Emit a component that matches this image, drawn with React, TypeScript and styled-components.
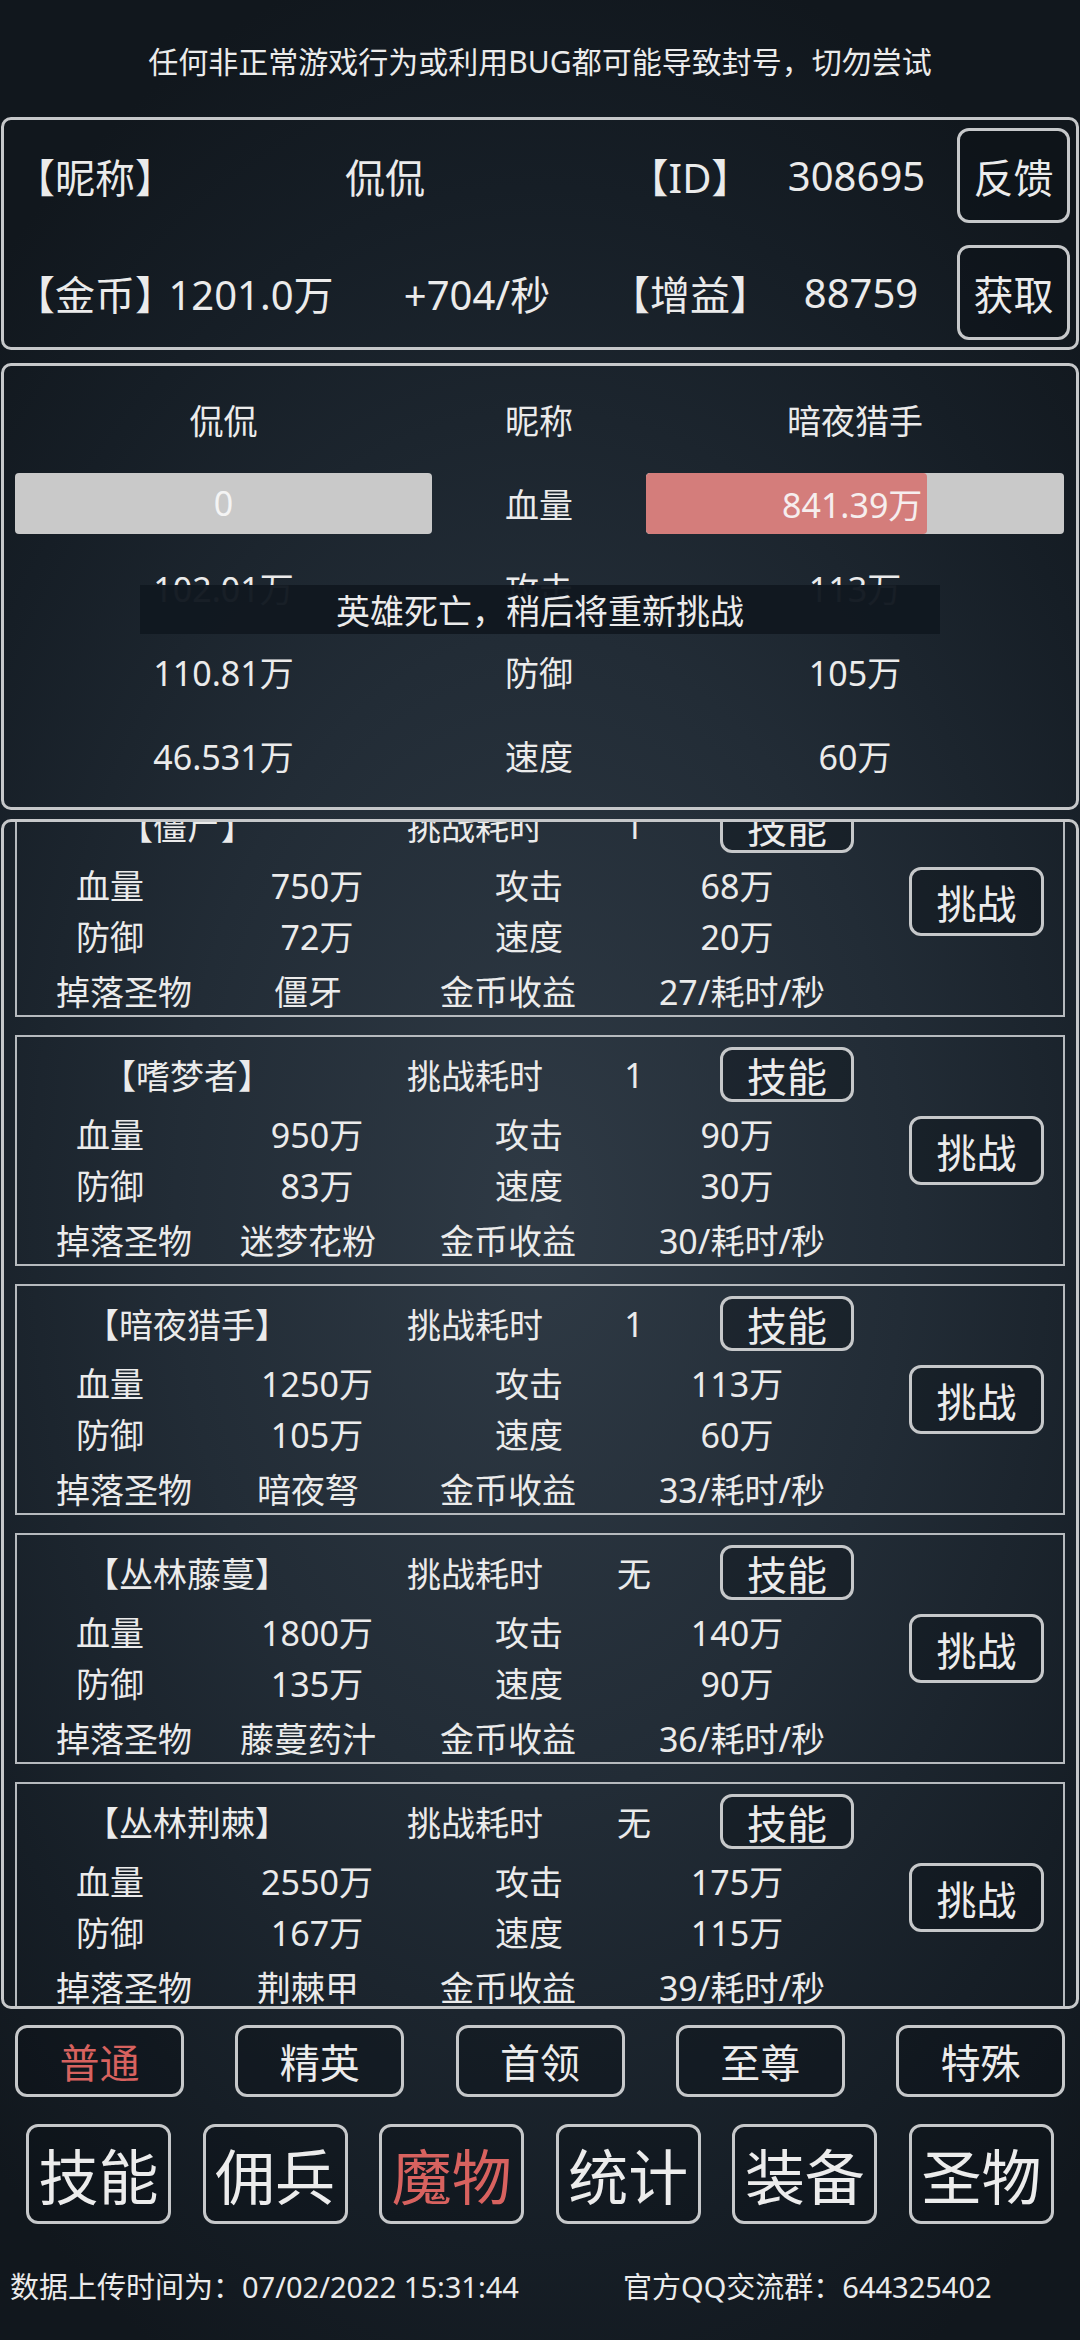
import * as React from 'react';
import styled, { createGlobalStyle } from 'styled-components';

const RED = '#d8625f';
const LINE = '#c6c8ca';

interface Monster {
  name: string;
  cost: string;
  hp: string;
  atk: string;
  def: string;
  spd: string;
  drop: string;
  gold: string;
}

const monsters: Monster[] = [
  { name: '僵尸', cost: '1', hp: '750万', atk: '68万', def: '72万', spd: '20万', drop: '僵牙', gold: '27/耗时/秒' },
  { name: '嗜梦者', cost: '1', hp: '950万', atk: '90万', def: '83万', spd: '30万', drop: '迷梦花粉', gold: '30/耗时/秒' },
  { name: '暗夜猎手', cost: '1', hp: '1250万', atk: '113万', def: '105万', spd: '60万', drop: '暗夜弩', gold: '33/耗时/秒' },
  { name: '丛林藤蔓', cost: '无', hp: '1800万', atk: '140万', def: '135万', spd: '90万', drop: '藤蔓药汁', gold: '36/耗时/秒' },
  { name: '丛林荆棘', cost: '无', hp: '2550万', atk: '175万', def: '167万', spd: '115万', drop: '荆棘甲', gold: '39/耗时/秒' },
];

const tabs = ['普通', '精英', '首领', '至尊', '特殊'];
const navItems = ['技能', '佣兵', '魔物', '统计', '装备', '圣物'];

const GlobalStyle = createGlobalStyle`
  html, body {
    margin: 0;
    padding: 0;
  }
  body {
    background: #131a21;
    color: #ebebeb;
    font-family: "Noto Sans", "Noto Sans CJK SC", sans-serif;
  }
  * {
    box-sizing: border-box;
  }
`;

function App() {
  const listRef = React.useRef<HTMLDivElement>(null);

  React.useLayoutEffect(() => {
    if (listRef.current) listRef.current.scrollTop = 36;
  }, []);

  const enemyHp = 841.39;
  const enemyMax = 1250;

  return (
    <Screen>
      <GlobalStyle />
      <Notice>任何非正常游戏行为或利用BUG都可能导致封号，切勿尝试</Notice>

      <Panel>
        <InfoRow $cols="132px 476px 134px 199px 1fr">
          <Cell>【昵称】</Cell>
          <Cell>侃侃</Cell>
          <Cell>【ID】</Cell>
          <Cell>308695</Cell>
          <SideButton>反馈</SideButton>
        </InfoRow>
        <InfoRow $cols="132px 208px 244px 182px 160px 1fr">
          <Cell>【金币】</Cell>
          <Cell>1201.0万</Cell>
          <Cell>+704/秒</Cell>
          <Cell>【增益】</Cell>
          <Cell>88759</Cell>
          <SideButton>获取</SideButton>
        </InfoRow>
      </Panel>

      <BattlePanel>
        <BattleText>侃侃</BattleText>
        <BattleText>昵称</BattleText>
        <BattleText>暗夜猎手</BattleText>

        <Bar>
          <BarCenterLabel>0</BarCenterLabel>
        </Bar>
        <BattleText>血量</BattleText>
        <Bar>
          <BarFill style={{ width: `${(enemyHp / enemyMax) * 100}%` }}>{enemyHp}万</BarFill>
        </Bar>

        <BattleText>102.01万</BattleText>
        <BattleText>攻击</BattleText>
        <BattleText>113万</BattleText>

        <BattleText>110.81万</BattleText>
        <BattleText>防御</BattleText>
        <BattleText>105万</BattleText>

        <BattleText>46.531万</BattleText>
        <BattleText>速度</BattleText>
        <BattleText>60万</BattleText>

        <Toast>英雄死亡，稍后将重新挑战</Toast>
      </BattlePanel>

      <ListFrame ref={listRef}>
        <List>
          {monsters.map((m) => (
            <Card key={m.name}>
              <CardBody>
                <HeaderRow>
                  <Cell>【{m.name}】</Cell>
                  <Cell>挑战耗时</Cell>
                  <Cell>{m.cost}</Cell>
                  <span />
                  <SkillButton>技能</SkillButton>
                </HeaderRow>
                <StatRow>
                  <Cell>血量</Cell>
                  <Cell>{m.hp}</Cell>
                  <Cell>攻击</Cell>
                  <Cell>{m.atk}</Cell>
                </StatRow>
                <StatRow>
                  <Cell>防御</Cell>
                  <Cell>{m.def}</Cell>
                  <Cell>速度</Cell>
                  <Cell>{m.spd}</Cell>
                </StatRow>
                <DropRow>
                  <Cell>掉落圣物</Cell>
                  <Cell>{m.drop}</Cell>
                  <Cell>金币收益</Cell>
                  <Cell>{m.gold}</Cell>
                </DropRow>
              </CardBody>
              <ChallengeButton>挑战</ChallengeButton>
            </Card>
          ))}
        </List>
      </ListFrame>

      <TabBar>
        {tabs.map((t, i) => (
          <TabButton key={t} $active={i === 0}>
            {t}
          </TabButton>
        ))}
      </TabBar>

      <NavBar>
        {navItems.map((n, i) => (
          <NavButton key={n} $active={i === 2}>
            {n}
          </NavButton>
        ))}
      </NavBar>

      <Footer>
        <span>数据上传时间为：07/02/2022 15:31:44</span>
        <span>官方QQ交流群：644325402</span>
      </Footer>
    </Screen>
  );
}

const Screen = styled.div`
  width: 1080px;
  height: 2340px;
  overflow: hidden;
  display: flex;
  flex-direction: column;
  background: radial-gradient(
    ellipse 75% 55% at 50% 52%,
    #2f3a45 0%,
    #222c36 45%,
    #161e26 80%,
    #11171d 100%
  );
`;

const Notice = styled.div`
  height: 117px;
  display: flex;
  align-items: center;
  justify-content: center;
  font-size: 30px;
  padding-top: 2px;
`;

const Panel = styled.section`
  margin: 0 1px;
  border: 3px solid ${LINE};
  border-radius: 10px;
  padding: 8px 6px 7px 11px;
  display: flex;
  flex-direction: column;
  gap: 22px;
`;

const InfoRow = styled.div<{ $cols: string }>`
  display: grid;
  grid-template-columns: ${(p) => p.$cols};
  align-items: center;
  height: 95px;
  font-size: 40px;
`;

const Cell = styled.span`
  text-align: center;
  white-space: nowrap;
`;

const OutlineButton = styled.div`
  display: flex;
  align-items: center;
  justify-content: center;
  border: 3px solid ${LINE};
  border-radius: 12px;
  background: rgba(10, 14, 19, 0.35);
  color: #ececec;
  white-space: nowrap;
`;

const SideButton = styled(OutlineButton)`
  justify-self: end;
  width: 113px;
  height: 95px;
  font-size: 40px;
`;

const BattlePanel = styled.section`
  position: relative;
  margin: 13px 1px 0;
  border: 3px solid ${LINE};
  border-radius: 10px;
  padding: 11px 11px 10px;
  display: grid;
  grid-template-columns: 417px 214px 418px;
  grid-auto-rows: 84px;
  align-items: center;
  justify-items: center;
`;

const BattleText = styled.span`
  font-size: 34px;
  white-space: nowrap;
`;

const Bar = styled.div`
  position: relative;
  width: 100%;
  height: 61px;
  background: #c9c9c9;
  border-radius: 4px;
  overflow: hidden;
`;

const BarCenterLabel = styled.div`
  position: absolute;
  inset: 0;
  display: flex;
  align-items: center;
  justify-content: center;
  font-size: 34px;
  color: #f4f4f4;
`;

const BarFill = styled.div`
  height: 100%;
  background: #d47d7b;
  border-radius: 4px;
  display: flex;
  align-items: center;
  justify-content: flex-end;
  padding-right: 5px;
  font-size: 34px;
  color: #f6eeee;
  white-space: nowrap;
`;

const Toast = styled.div`
  position: absolute;
  top: 219px;
  left: 136px;
  width: 800px;
  height: 49px;
  display: flex;
  align-items: center;
  justify-content: center;
  background: rgba(17, 24, 32, 0.97);
  font-size: 34px;
`;

const ListFrame = styled.section`
  margin: 9px 1px 0;
  height: 1190px;
  border: 3px solid ${LINE};
  border-radius: 10px;
  overflow: hidden;
`;

const List = styled.div`
  padding: 0 11px 20px;
  display: flex;
  flex-direction: column;
  gap: 18px;
`;

const Card = styled.article`
  height: 231px;
  border: 2px solid #b6babe;
  display: flex;
  align-items: center;
`;

const CardBody = styled.div`
  display: flex;
  flex-direction: column;
  padding-top: 10px;
  font-size: 34px;
  align-self: stretch;
`;

const HeaderRow = styled.div`
  display: grid;
  grid-template-columns: 340px 236px 82px 45px 134px;
  align-items: center;
  height: 55px;
  margin-bottom: 6px;
`;

const StatRow = styled.div`
  display: grid;
  grid-template-columns: 186px 228px 196px 220px;
  align-items: center;
  height: 51px;
`;

const DropRow = styled.div`
  display: grid;
  grid-template-columns: 214px 154px 246px 222px;
  align-items: center;
  height: 50px;
  margin-top: 4px;
`;

const SkillButton = styled(OutlineButton)`
  width: 134px;
  height: 55px;
  font-size: 40px;
`;

const ChallengeButton = styled(OutlineButton)`
  margin-left: auto;
  margin-right: 19px;
  width: 135px;
  height: 69px;
  font-size: 40px;
`;

const TabBar = styled.nav`
  margin-top: 16px;
  padding: 0 15px 0 15px;
  display: flex;
  justify-content: space-between;
`;

const TabButton = styled(OutlineButton)<{ $active: boolean }>`
  width: 169px;
  height: 72px;
  font-size: 40px;
  color: ${(p) => (p.$active ? RED : '#ececec')};
`;

const NavBar = styled.nav`
  margin-top: 27px;
  padding: 0 26px;
  display: flex;
  justify-content: space-between;
`;

const NavButton = styled(OutlineButton)<{ $active: boolean }>`
  width: 145px;
  height: 100px;
  font-size: 60px;
  color: ${(p) => (p.$active ? RED : '#ececec')};
`;

const Footer = styled.footer`
  margin-top: 40px;
  height: 40px;
  padding-left: 10px;
  display: grid;
  grid-template-columns: 613px 1fr;
  align-items: center;
  font-size: 29px;
  white-space: nowrap;
`;

export default App;
